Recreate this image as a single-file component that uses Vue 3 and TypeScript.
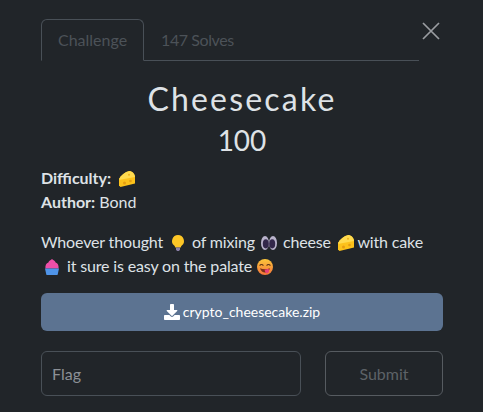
<template>
  <div class="modal">
    <div class="head">
      <nav class="tabs">
        <a class="tab tab--active">Challenge</a>
        <a class="tab tab--solves">147 Solves</a>
      </nav>
      <button class="close" aria-label="Close">
        <svg width="18" height="18" viewBox="0 0 18 18">
          <path d="M1 1 L17 17 M17 1 L1 17" stroke="#9a9da1" stroke-width="1.7" fill="none" />
        </svg>
      </button>
    </div>

    <h1 class="title">Cheesecake</h1>
    <h2 class="value">100</h2>

    <p class="meta">
      <strong>Difficulty:</strong>
      <svg class="emoji emoji--difficulty" viewBox="0 0 16 16"><use href="#cheese" /></svg>
      <br />
      <strong>Author:</strong> Bond
    </p>

    <p class="desc">
      Whoever thought
      <svg class="emoji emoji--bulb" viewBox="0 0 16 16">
        <path d="M8 0a6 6 0 0 0-3.800 10.600c.7.600 1 1.100 1 1.900h5.600c0-.8.300-1.300 1-1.900A6 6 0 0 0 8 0z" fill="#fdc626" />
        <path d="M6 12.400h4v2.200L9 16H7l-1-1.400z" fill="#8b7fa8" />
      </svg>
      of mixing
      <svg class="emoji" viewBox="0 0 16 16">
        <ellipse cx="4" cy="8" rx="4" ry="7" fill="#b9b3cb" />
        <ellipse cx="12" cy="8" rx="4" ry="7" fill="#b9b3cb" />
        <ellipse cx="4.800" cy="8.800" rx="3" ry="4.600" fill="#33284a" />
        <ellipse cx="11.200" cy="8.800" rx="3" ry="4.600" fill="#33284a" />
      </svg>
      cheese
      <svg class="emoji emoji--cheese" viewBox="0 0 16 16"><use href="#cheese" /></svg>
      with cake
      <svg class="emoji emoji--cupcake" viewBox="0 0 16 16">
        <path d="M8 0c1 1.200 3.200 1.600 3.600 3.400 2.200.6 3.200 2.600 3 6.200H1.400c-.2-3.600.8-5.600 3-6.200C4.800 1.600 7 1.200 8 0z" fill="#ee4fa8" />
        <path d="M1 9.600h14l-1.300 5.800a1 1 0 0 1-1 .6H3.300a1 1 0 0 1-1-.6z" fill="#4f94e8" />
      </svg>
      it sure is easy on the palate
      <svg class="emoji emoji--smiley" viewBox="0 0 16 16">
        <defs>
          <linearGradient id="face" x1="0" y1="0" x2="0" y2="1">
            <stop offset="0" stop-color="#fcc63a" />
            <stop offset="1" stop-color="#f4743a" />
          </linearGradient>
        </defs>
        <circle cx="8" cy="8" r="8" fill="url(#face)" />
        <path d="M2.600 6.600c1-1.500 2.800-1.500 3.800 0M9.600 6.600c1-1.500 2.800-1.500 3.800 0" stroke="#5b3216" stroke-width="1.100" fill="none" />
        <path d="M3 9.200c3 1.500 7 1.500 10 0-.8 2.800-2.800 4.200-5 4.200S3.800 12 3 9.200z" fill="#7a2f1a" />
        <path d="M7.600 10.800l4-1c.8 2 .4 4-1.200 4.400-1.600.4-2.500-1.400-2.800-3.400z" fill="#ec3f78" />
      </svg>
    </p>

    <a class="download">
      <svg class="download__icon" viewBox="0 0 512 512">
        <path d="M216 0h80c13 0 24 11 24 24v168h88c18 0 27 22 14 34L270 379c-8 8-20 8-28 0L90 226c-13-12-4-34 14-34h88V24c0-13 11-24 24-24z" fill="#fff" />
        <path d="M512 376v112c0 13-11 24-24 24H24c-13 0-24-11-24-24V376c0-13 11-24 24-24h147l49 49c20 20 52 20 72 0l49-49h147c13 0 24 11 24 24z" fill="#fff" />
      </svg>
      <span>crypto_cheesecake.zip</span>
    </a>

    <form class="answer" @submit.prevent>
      <input class="answer__input" type="text" placeholder="Flag" />
      <button class="answer__submit" type="submit">Submit</button>
    </form>

    <svg width="0" height="0" class="defs">
      <defs>
        <g id="cheese">
          <path d="M0 8 C2 4 6 1 10.500 0 13.500 .5 15.800 3 16 6v6.500L1.500 16 0 14.500z" fill="#fcc21b" />
          <path d="M0 8 C2 4 6 1 10.500 0 13.500 .5 15.800 3 16 6L1 8.800z" fill="#ffdb4f" />
          <circle cx="5.500" cy="12" r="1.500" fill="#e59d12" />
          <circle cx="11.500" cy="10" r="1.300" fill="#e59d12" />
          <circle cx="10" cy="3.800" r="1" fill="#eeb01c" />
        </g>
      </defs>
    </svg>
  </div>
</template>

<script setup lang="ts">
</script>

<style>
html,
body {
  background: #212529;
}
</style>

<style scoped>
.modal {
  box-sizing: border-box;
  width: 483px;
  height: 412px;
  padding: 19px 40px 0 41px;
  background: #212529;
  color: #dee2e6;
  font-family: Lato, "Liberation Sans", sans-serif;
  font-size: 16px;
  line-height: 24px;
  overflow: hidden;
}

.head {
  display: flex;
  align-items: flex-start;
}

.tabs {
  display: flex;
  width: 378px;
  height: 42px;
  box-sizing: border-box;
  border-bottom: 1px solid #495057;
}

.tab {
  box-sizing: border-box;
  height: 42px;
  padding: 8px 16px;
  border: 1px solid transparent;
  border-radius: 6px 6px 0 0;
  color: #4c5258;
}

.tab--active {
  width: 103px;
  border-color: #495057 #495057 #212529;
}

.tab--solves {
  letter-spacing: -0.4px;
}

.close {
  display: flex;
  margin: 3px 0 0 3px;
  padding: 0;
  border: 0;
  background: none;
}

.title {
  margin: 14px 0 0;
  font-size: 32px;
  line-height: 48px;
  font-weight: 400;
  letter-spacing: 2.200px;
  text-align: center;
  color: #dee2e6;
}

.value {
  margin: 0;
  font-size: 28px;
  line-height: 34px;
  font-weight: 400;
  text-align: center;
  color: #dee2e6;
}

.meta {
  margin: 9px 0 0;
}

.desc {
  margin: 16px 0 0;
  letter-spacing: -0.15px;
}

.emoji {
  display: inline-block;
  width: 16px;
  height: 16px;
  margin: 0 2px;
  vertical-align: -3px;
}

.emoji--difficulty {
  margin-left: 8px;
}

.emoji--bulb {
  margin: 0 2px 0 3px;
}

.emoji--cheese {
  margin: 0 0 0 3px;
}

.emoji--cupcake {
  margin: 0 3px;
}

.emoji--smiley {
  margin: 0 2px 0 1px;
}

.download {
  display: flex;
  align-items: center;
  justify-content: center;
  gap: 3px;
  height: 38px;
  margin-top: 15px;
  border-radius: 6px;
  background: #5c7391;
  color: #fff;
  font-size: 14px;
}

.download__icon {
  width: 16px;
  height: 16px;
}

.answer {
  display: flex;
  justify-content: space-between;
  margin-top: 20px;
}

.answer__input {
  box-sizing: border-box;
  width: 260px;
  height: 45px;
  padding: 0 10px;
  border: 1px solid #495057;
  border-radius: 6px;
  background: #212529;
  color: #dee2e6;
  font: inherit;
}

.answer__input::placeholder {
  color: #8c9096;
  opacity: 1;
}

.answer__submit {
  box-sizing: border-box;
  width: 118px;
  height: 45px;
  padding: 0;
  border: 1px solid #565b60;
  border-radius: 6px;
  background: none;
  color: #5d6267;
  font: inherit;
}

.defs {
  position: absolute;
}
</style>
